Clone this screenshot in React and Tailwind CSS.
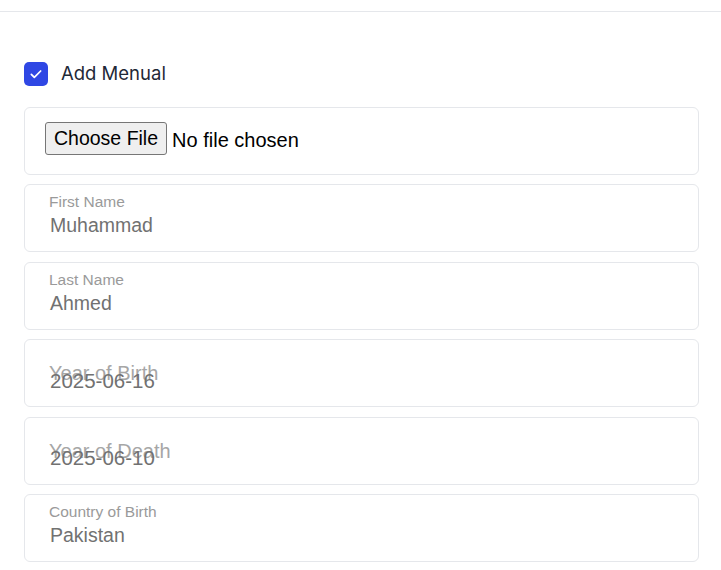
import React from 'react';

function Field({ label, value }) {
  return (
    <div className="h-[68px] rounded-md border border-[#e5e7eb] pl-6 pr-5 pt-[8px]">
      <div className="text-[15.5px] leading-[18px] text-[#9a9a9a]">{label}</div>
      <div className="mt-[2px] pl-px text-[19.5px] leading-6 text-[#717171]">{value}</div>
    </div>
  );
}

function DateField({ label, value }) {
  return (
    <div className="relative flex h-[68px] items-center rounded-md border border-[#e5e7eb] pl-6 pr-5">
      <span className="absolute left-6 top-1/2 -translate-y-1/2 text-[20px] leading-6 text-[#a6a6a6]">
        {label}
      </span>
      <span className="relative mt-[15px] pl-px text-[20.5px] leading-6 text-[#717171]">{value}</span>
    </div>
  );
}

export default function App() {
  return (
    <div className="min-h-screen bg-white font-['Liberation_Sans',Arial,sans-serif]">
      <div className="h-[12px] border-b border-[#e5e7eb]" />
      <div className="pl-6 pr-[22px]">
        <div className="mt-[48px] flex items-center gap-[13px]">
          <div className="flex h-6 w-6 items-center justify-center rounded-[5px] bg-[#2f47e4]">
            <svg width="16" height="16" viewBox="0 0 24 24" fill="none" stroke="white" strokeWidth="2.6" strokeLinecap="round" strokeLinejoin="round">
              <path d="M5 12.5l4.5 4.5L19 7.5" />
            </svg>
          </div>
          <span className="font-['Inter',sans-serif] text-[18.5px] text-[#1f2937]">Add Menual</span>
        </div>

        <div className="mt-[19px] flex flex-col gap-[9.5px]">
          <div className="flex h-[68px] items-start rounded-md border border-[#e5e7eb] pl-5 pr-5 pt-[14px]">
            <button className="h-[33px] rounded-[3px] border border-[#767676] bg-[#efefef] px-2 text-[19.5px] text-black">
              Choose File
            </button>
            <span className="ml-[5px] mt-[3px] text-[20px] text-black">No file chosen</span>
          </div>
          <Field label="First Name" value="Muhammad" />
          <Field label="Last Name" value="Ahmed" />
          <DateField label="Year of Birth" value="2025-06-16" />
          <DateField label="Year of Death" value="2025-06-10" />
          <Field label="Country of Birth" value="Pakistan" />
          <div className="pt-1 text-[14px] font-bold text-[#1f2937]">Date of Issue</div>
        </div>
      </div>
    </div>
  );
}
